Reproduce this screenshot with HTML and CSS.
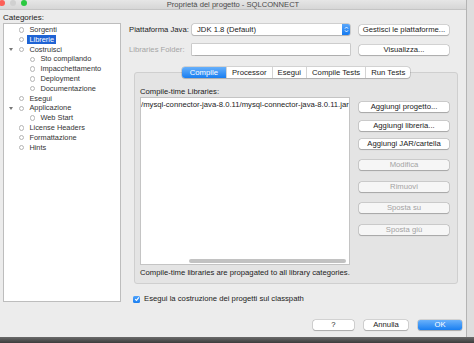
FILE: index.html
```html
<!DOCTYPE html>
<html lang="it">
<head>
  <meta charset="UTF-8">
  <title>Proprietà del progetto - SQLCONNECT</title>
  <link rel="stylesheet" href="styles.css">
</head>
<body>
  <div class="screen">
    <div class="window">
      <div class="titlebar">
        <span class="light red"></span>
        <span class="light off"></span>
        <span class="light green"></span>
        <span class="title">Proprietà del progetto - SQLCONNECT</span>
      </div>

      <div class="body">
        <div class="sidebar">
          <div class="cat-label">Categories:</div>
          <ul class="tree">
            <li><span class="dot"></span>Sorgenti</li>
            <li><span class="dot"></span><span class="sel">Librerie</span></li>
            <li><span class="twisty"></span><span class="dot"></span>Costruisci</li>
            <li class="sub"><span class="dot"></span>Sto compilando</li>
            <li class="sub"><span class="dot"></span>Impacchettamento</li>
            <li class="sub"><span class="dot"></span>Deployment</li>
            <li class="sub"><span class="dot"></span>Documentazione</li>
            <li><span class="dot"></span>Esegui</li>
            <li><span class="twisty"></span><span class="dot"></span>Applicazione</li>
            <li class="sub"><span class="dot"></span>Web Start</li>
            <li><span class="dot"></span>License Headers</li>
            <li><span class="dot"></span>Formattazione</li>
            <li><span class="dot"></span>Hints</li>
          </ul>
        </div>

        <div class="main">
          <div class="form">
            <span class="label">Piattaforma Java:</span>
            <div class="combo">
              <span>JDK 1.8 (Default)</span>
              <span class="stepper">
                <svg width="5" height="7" viewBox="0 0 5 7">
                  <path d="M1 2.6 L2.5 1 L4 2.6 M1 4.4 L2.5 6 L4 4.4" fill="none" stroke="#fff" stroke-width="0.9"/>
                </svg>
              </span>
            </div>
            <button class="btn">Gestisci le piattaforme...</button>
            <span class="label dim">Libraries Folder:</span>
            <div class="field"></div>
            <button class="btn">Visualizza...</button>
          </div>

          <div class="tabbox">
            <div class="tabs">
              <span class="tab active">Compile</span>
              <span class="tab">Processor</span>
              <span class="tab">Esegui</span>
              <span class="tab">Compile Tests</span>
              <span class="tab">Run Tests</span>
            </div>
            <div class="panel">
              <div class="lib-label">Compile-time Libraries:</div>
              <div class="lib-row">
                <div class="list">
                  <div class="item">/mysql-connector-java-8.0.11/mysql-connector-java-8.0.11.jar</div>
                  <div class="hscroll"><div class="thumb"></div></div>
                </div>
                <div class="actions">
                  <div class="group">
                    <button class="btn">Aggiungi progetto...</button>
                    <button class="btn">Aggiungi libreria...</button>
                    <button class="btn">Aggiungi JAR/cartella</button>
                  </div>
                  <div class="group loose">
                    <button class="btn" disabled>Modifica</button>
                    <button class="btn" disabled>Rimuovi</button>
                    <button class="btn" disabled>Sposta su</button>
                    <button class="btn" disabled>Sposta giù</button>
                  </div>
                </div>
              </div>
              <div class="note">Compile-time libraries are propagated to all library categories.</div>
            </div>
          </div>

          <label class="check">
            <span class="box">
              <svg width="6" height="6" viewBox="0 0 6 6">
                <path d="M1.2 3.1 L2.5 4.4 L4.9 1.4" fill="none" stroke="#fff" stroke-width="1.1"/>
              </svg>
            </span>
            Esegui la costruzione dei progetti sul classpath
          </label>
        </div>
      </div>

      <div class="footer">
        <button class="btn help">?</button>
        <button class="btn cancel">Annulla</button>
        <button class="btn ok">OK</button>
      </div>
    </div>
    <div class="edge"></div>
  </div>
  <div class="desktop"></div>
</body>
</html>
```

FILE: styles.css
```css
/* ─── Base ─── */
html, body { margin: 0; padding: 0; }
body {
  width: 474px; height: 343px; overflow: hidden;
  font-family: 'Liberation Sans', Arial, sans-serif;
  font-size: 7.7px; color: #222;
  background: #4b4b4b;
}
.screen { display: flex; height: 337px; }
.window {
  width: 466px; height: 337px;
  background: #ececec;
  border-right: 1px solid #b4b4b4;
  display: flex; flex-direction: column;
}
.edge { flex: 1; background: #dedede; }
.desktop {
  height: 6px;
  background: linear-gradient(#6b6b6b, #3c3c3c);
}

/* ─── Title bar ─── */
.titlebar {
  height: 10px; position: relative;
  background: linear-gradient(#e6e6e6, #d6d6d6);
  border-bottom: 1px solid #c4c4c4;
  display: flex; align-items: flex-start; gap: 5px;
  box-sizing: border-box;
}
.light { width: 6px; height: 6px; border-radius: 50%; }
.light.red { background: #fc5f57; margin-left: -1px; }
.light.off { background: #d0d0d0; }
.light.green { background: #2ac940; }
.title {
  position: absolute; left: 0; right: 0; top: 0;
  text-align: center; line-height: 9px; font-size: 7.6px; color: #4b4b4b;
}

/* ─── Body ─── */
.body { display: flex; height: 300px; }
.sidebar { width: 122px; padding-top: 2px; box-sizing: border-box; }
.cat-label { padding-left: 3px; height: 11px; line-height: 11px; font-size: 8px; }
.tree {
  list-style: none; margin: 0 0 0 3px; padding: 1px 0 0;
  width: 118px; height: 279px; font-size: 7.4px;
  background: #fff; border: 1px solid #bdbdbd; box-sizing: border-box;
}
.tree li {
  height: 9.8px; line-height: 9.8px; padding-left: 15px;
  display: flex; align-items: center; position: relative;
  color: #333;
}
.tree li.sub { padding-left: 26px; }
.dot {
  width: 3.4px; height: 3.4px; border-radius: 50%;
  border: 0.8px solid #b4b4b4; margin-right: 5px; flex: none;
}
.twisty {
  position: absolute; left: 5px; top: 3.5px;
  width: 0; height: 0;
  border-left: 2.2px solid transparent; border-right: 2.2px solid transparent;
  border-top: 3.2px solid #777;
}
.sel {
  background: #1f63d4; color: #fff;
  padding: 0 2px; margin-left: -2px; line-height: 9px;
}

/* ─── Main column ─── */
.main { flex: 1; padding: 14px 0 0 7px; }
.form {
  display: grid;
  grid-template-columns: 54px 158px 90px;
  grid-auto-rows: 11px;
  column-gap: 9px; row-gap: 9px;
  align-items: center;
}
.label { white-space: nowrap; }
.label.dim { color: #a5a5a5; }
.combo, .field {
  height: 11px; box-sizing: border-box;
  background: #fff;
  box-shadow: 0 0 0 0.6px rgba(0,0,0,0.22), 0 0.6px 1px rgba(0,0,0,0.15);
  border-radius: 2px;
}
.combo {
  display: flex; align-items: center; justify-content: space-between;
  padding-left: 5px;
}
.stepper {
  width: 8px; height: 11px; border-radius: 0 2px 2px 0;
  background: linear-gradient(#5aa7fb, #1479ef);
  display: flex; align-items: center; justify-content: center;
}
.field { border-radius: 0; }

.btn {
  font: inherit; color: #222;
  height: 10px; padding: 0; margin: 0;
  background: #fff; border: none; border-radius: 2.5px;
  box-shadow: 0 0 0 0.6px rgba(0,0,0,0.18), 0 0.8px 1px rgba(0,0,0,0.2);
  line-height: 10px; white-space: nowrap;
}
.btn:disabled { color: #a3a3a3; background: #f6f6f6; }

/* ─── Tab box ─── */
.tabbox { margin: 12px 0 0 5px; width: 324px; }
.tabs {
  position: relative; z-index: 1;
  display: flex; width: max-content; margin: 0 auto;
  background: #fff; border-radius: 3px; height: 11px;
  box-shadow: 0 0 0 0.6px rgba(0,0,0,0.2), 0 0.8px 1px rgba(0,0,0,0.15);
}
.tab {
  line-height: 11px; padding: 0 5px;
  border-left: 0.6px solid #d4d4d4;
}
.tab:first-child { border-left: none; }
.tab.active {
  color: #fff; border-radius: 3px 0 0 3px; padding: 0 8px;
  background: linear-gradient(#67b0fb, #187ef1);
}
.panel {
  margin-top: -6px; height: 212px; box-sizing: border-box;
  background: #e4e4e4; border: 1px solid #cfcfcf; border-radius: 3px;
  padding: 13px 8px 0 5px;
}
.lib-label { height: 11px; line-height: 11px; }
.lib-row { display: flex; }
.list {
  width: 210px; height: 168px; box-sizing: border-box;
  background: #fff; border: 1px solid #c4c4c4;
  display: flex; flex-direction: column; overflow: hidden;
}
.item {
  white-space: nowrap; line-height: 10px; padding-top: 2px;
  color: #222;
}
.hscroll { margin-top: auto; height: 7px; display: flex; align-items: center; padding-left: 48px; padding-right: 3px; }
.thumb { flex: 1; height: 4px; border-radius: 2px; background: #c2c2c2; }
.actions {
  margin-left: 9px; width: 90px; padding-top: 5px;
  display: flex; flex-direction: column; gap: 11px;
}
.group { display: flex; flex-direction: column; gap: 8.5px; }
.group.loose { gap: 11.5px; }
.note { margin-top: 3px; line-height: 10px; white-space: nowrap; }

/* ─── Checkbox ─── */
.check {
  display: flex; align-items: center; gap: 4px;
  margin: 10px 0 0 4px; line-height: 10px;
}
.box {
  width: 7px; height: 7px; border-radius: 1.5px;
  background: linear-gradient(#4ea2fb, #1a7ef0);
  display: flex; align-items: center; justify-content: center;
}

/* ─── Footer ─── */
.footer {
  flex: 1; display: flex; justify-content: flex-end; align-items: flex-start;
  padding: 10px 4px 0 0; gap: 10px;
}
.help { width: 41px; }
.cancel { width: 44px; }
.ok {
  width: 44px; color: #fff;
  background: linear-gradient(#69b1fb, #197ff1);
}
```
